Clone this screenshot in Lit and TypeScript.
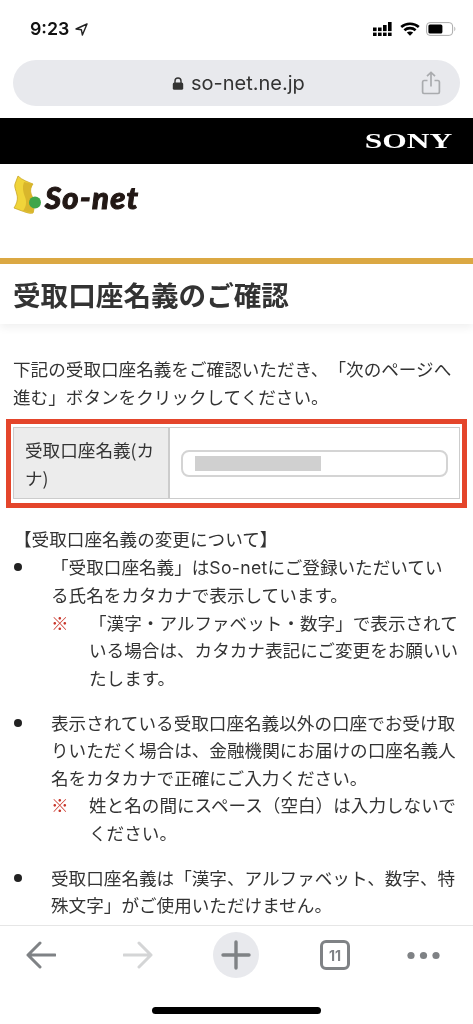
import { LitElement, html, css } from "lit";
import { customElement } from "lit/decorators.js";

@customElement("app-root")
export class AppRoot extends LitElement {
  static styles = css`
    :host { display: block; width: 473px; height: 1024px; background: #fff; overflow: hidden; }
    * { box-sizing: border-box; }
    .page { display: flex; flex-direction: column; height: 1024px; font-family: "Noto Sans CJK JP", "Noto Sans", sans-serif; color: #333; filter: blur(0.35px); text-spacing-trim: space-all; }
    .status { flex: none; height: 48px; display: flex; align-items: center; padding: 10px 17px 0 30px; }
    .time { font: 600 17.8px Inter, "Liberation Sans", sans-serif; color: #111; line-height: 20px; }
    .loc { margin-left: 6px; }
    .status-right { margin-left: auto; display: flex; align-items: center; gap: 6px; }
    .url { flex: none; margin: 12px 13px 0; height: 46px; border-radius: 23px; background: #e8e9ed; display: flex; align-items: center; padding: 0 19px 0 159px; }
    .url-text { font: 400 20px Inter, "Liberation Sans", sans-serif; letter-spacing: 0; color: #333; margin-left: 7px; line-height: 24px; }
    .share { margin-left: auto; }
    .sony { flex: none; margin-top: 12px; height: 46px; background: #000; display: flex; justify-content: flex-end; align-items: center; padding-right: 21px; }
    .sony span { display: block; font: 700 21px "Liberation Serif", serif; color: #fff; line-height: 20px; transform: scaleX(1.5); transform-origin: right center; }
    .logo-row { flex: none; height: 94px; display: flex; align-items: flex-start; padding: 11px 0 0 12px; }
    .logo-text { font: italic 900 31px Lato, "Liberation Sans", sans-serif; color: #221815; line-height: 40px; margin: 2px 0 0 0; letter-spacing: 1.3px; -webkit-text-stroke: 1px #221815; }
    .content { flex: 1; min-height: 0; overflow: hidden; }
    .head { border-top: 6px solid #dba843; height: 66px; box-shadow: 0 4px 8px rgba(0,0,0,.06); padding: 0 13px; }
    h1 { margin: 0; font-size: 27.6px; font-weight: 700; line-height: 60px; color: #333; }
    .intro { margin: 31px 13px 0; font-size: 17.6px; line-height: 28px; }
    .frame { margin: 8px 6px 0; border: 5px solid #e4452b; padding: 3px 2px 4px; }
    .table { display: flex; border: 1px solid #ccc; height: 72px; }
    .th { flex: none; width: 156px; background: #ececec; border-right: 2px solid #ccc; padding: 8px 10px 0 11px; font-size: 17.6px; line-height: 28px; }
    .td { flex: 1; display: flex; align-items: center; padding: 0 11px 0 11px; }
    .input { width: 100%; height: 27px; border: 2px solid #d4d4d4; border-radius: 8px; padding: 4px 0 0 12px; }
    .mask { width: 126px; height: 15px; background: #d0d0d0; }
    .list-title { margin: 17px 0 0 14px; font-size: 17.6px; line-height: 27.6px; }
    ul { list-style: none; margin: 0; padding: 0 13px 0 0; }
    li { display: flex; }
    li + li { margin-top: 17px; }
    .dot { flex: none; width: 51px; padding: 10px 0 0 14px; }
    .dot i { display: block; width: 8px; height: 8px; border-radius: 50%; background: #222; }
    .body { flex: 1; font-size: 17.6px; line-height: 27.6px; }
    .latin { font-family: Inter, "Noto Sans", sans-serif; letter-spacing: 0.3px; }
    .note { display: flex; }
    .mark { flex: none; width: 38px; color: #c9372c; }
    .note p { margin: 0; flex: 1; }
    .toolbar { flex: none; height: 99px; background: #fff; border-top: 1px solid #e6e6e6; display: flex; flex-direction: column; }
    .tools { display: flex; align-items: center; height: 54px; padding: 4px 0 0 26px; }
    .m1 { margin-left: 67px; }
    .m2 { margin-left: 60px; }
    .m3 { margin-left: 61px; }
    .m4 { margin-left: 57px; }
    .plus { width: 46px; height: 46px; border-radius: 50%; background: #e8e9ed; display: flex; align-items: center; justify-content: center; }
    .tabs { width: 30px; height: 30px; border: 3px solid #7f8285; border-radius: 6px; display: flex; align-items: center; justify-content: center; font: 700 14px Inter, "Liberation Sans", sans-serif; color: #7f8285; }
    .home { margin: 27px auto 0; width: 169px; height: 7px; border-radius: 4px; background: #000; }
  `;

  render() {
    return html`
      <div class="page">
        <div class="status">
          <span class="time">9:23</span>
          <svg class="loc" width="13" height="13" viewBox="0 0 13 13"><path d="M12 1 L1 6 L6.4 6.8 L7.4 12 Z" fill="none" stroke="#222" stroke-width="1.4" stroke-linejoin="round"/></svg>
          <div class="status-right">
            <svg width="21" height="14" viewBox="0 0 21 14" fill="#000">
              <rect x="0" y="5.5" width="3.6" height="3.6"/><rect x="5" y="5.5" width="3.6" height="3.6"/><rect x="10" y="3" width="3.6" height="6.1"/><rect x="15" y="0" width="3.6" height="9.1"/>
              <rect x="0" y="10.6" width="3.6" height="3.4"/><rect x="5" y="10.6" width="3.6" height="3.4"/><rect x="10" y="10.6" width="3.6" height="3.4"/><rect x="15" y="10.6" width="3.6" height="3.4"/>
            </svg>
            <svg width="20" height="14" viewBox="0 0 20 14" fill="none" stroke="#000" stroke-width="2.6">
              <path d="M1.2 5 C6 .6 14 .6 18.8 5"/><path d="M4.4 8.2 C7.5 5.4 12.5 5.4 15.6 8.2"/><path d="M10 13.8 L6.8 10.6 C8.8 9 11.2 9 13.2 10.6 Z" fill="#000" stroke="none"/>
            </svg>
            <svg width="30" height="14" viewBox="0 0 30 14">
              <rect x=".6" y=".6" width="26" height="12.8" rx="3.4" fill="none" stroke="#aaa" stroke-width="1"/>
              <rect x="2.4" y="2.4" width="14" height="9.2" rx="1.6" fill="#000"/>
              <path d="M28.4 4.8 C29.6 5.2 29.6 8.8 28.4 9.2 Z" fill="#aaa"/>
            </svg>
          </div>
        </div>

        <div class="url">
          <svg width="12" height="13" viewBox="0 0 12 13"><path d="M3 6V4a3 3 0 0 1 6 0v2" fill="none" stroke="#333" stroke-width="1.4"/><rect x=".8" y="5.4" width="10.4" height="7.4" rx="1.6" fill="#333"/></svg>
          <span class="url-text">so-net.ne.jp</span>
          <svg class="share" width="20" height="24" viewBox="0 0 20 24" fill="none" stroke="#a9abae" stroke-width="1.7">
            <path d="M6.5 9.5H3a1.6 1.6 0 0 0-1.4 1.6v9.8A1.6 1.6 0 0 0 3 22.5h14a1.6 1.6 0 0 0 1.4-1.6v-9.8A1.6 1.6 0 0 0 17 9.5h-3.5"/>
            <path d="M10 15.5V1.5M6 5.2 10 1.4l4 3.8"/>
          </svg>
        </div>

        <div class="sony"><span>SONY</span></div>

        <div class="logo-row">
          <svg width="33" height="42" viewBox="0 0 33 42">
            <path d="M6 1 C10 5 16 7 21 9 C18 13 18 17 20 21 C22 26 23 32 21 38 C17 39 13 37 2 33 C5 28 6 24 5 20 C4 15 2 12 3 9 C4 6 5 4 6 1 Z" fill="#f0d43a" stroke="#c9a524" stroke-width=".8"/>
            <path d="M12 7 C10 12 11 17 13 22 C15 27 14 32 11 36 L21 38 C23 32 22 26 20 21 C18 17 18 13 21 9 Z" fill="#d9b62c"/>
            <circle cx="23" cy="27.5" r="6" fill="#3fa64a"/>
          </svg>
          <span class="logo-text">So-net</span>
        </div>

        <div class="content">
          <div class="head"><h1>受取口座名義のご確認</h1></div>
          <div class="intro">下記の受取口座名義をご確認いただき、「次のページへ進む」ボタンをクリックしてください。</div>
          <div class="frame">
            <div class="table">
              <div class="th">受取口座名義(カナ)</div>
              <div class="td"><div class="input"><div class="mask"></div></div></div>
            </div>
          </div>
          <div class="list-title">【受取口座名義の変更について】</div>
          <ul>
            <li>
              <span class="dot"><i></i></span>
              <div class="body">「受取口座名義」は<span class="latin">So-net</span>にご登録いただいている氏名をカタカナで表示しています。
                <div class="note"><span class="mark">※</span><p>「漢字・アルファベット・数字」で表示されている場合は、カタカナ表記にご変更をお願いいたします。</p></div>
              </div>
            </li>
            <li>
              <span class="dot"><i></i></span>
              <div class="body">表示されている受取口座名義以外の口座でお受け取りいただく場合は、金融機関にお届けの口座名義人名をカタカナで正確にご入力ください。
                <div class="note"><span class="mark">※</span><p>姓と名の間にスペース（空白）は入力しないでください。</p></div>
              </div>
            </li>
            <li>
              <span class="dot"><i></i></span>
              <div class="body">受取口座名義は「漢字、アルファベット、数字、特殊文字」がご使用いただけません。</div>
            </li>
          </ul>
        </div>

        <div class="toolbar">
          <div class="tools">
            <svg width="30" height="28" viewBox="0 0 30 28" fill="none" stroke="#7f8285" stroke-width="3" stroke-linecap="round" stroke-linejoin="round"><path d="M29 14H2M14 2 2 14l12 12"/></svg>
            <svg class="m1" width="30" height="28" viewBox="0 0 30 28" fill="none" stroke="#d4d5d6" stroke-width="3" stroke-linecap="round" stroke-linejoin="round"><path d="M1 14h27M16 2l12 12-12 12"/></svg>
            <div class="plus m2"><svg width="30" height="30" viewBox="0 0 30 30" stroke="#7f8285" stroke-width="3.4" stroke-linecap="round"><path d="M15 2v26M2 15h26"/></svg></div>
            <div class="tabs m3">11</div>
            <svg class="m4" width="33" height="9" viewBox="0 0 33 9" fill="#7f8285"><circle cx="4" cy="4.5" r="3.6"/><circle cx="16.5" cy="4.5" r="3.6"/><circle cx="29" cy="4.5" r="3.6"/></svg>
          </div>
          <div class="home"></div>
        </div>
      </div>
    `;
  }
}
